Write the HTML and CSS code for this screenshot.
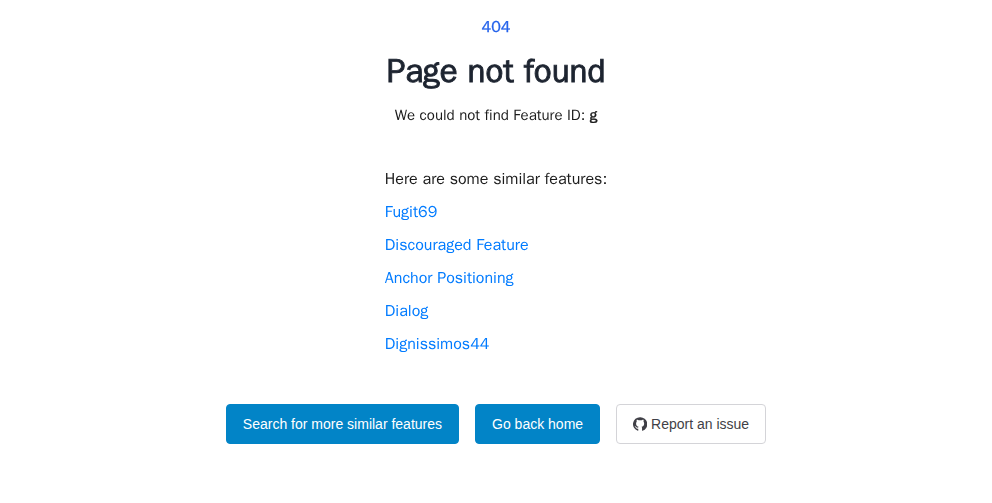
FILE: index.html
```html
<!DOCTYPE html>
<html lang="en">
<head>
<meta charset="utf-8">
<title>Page not found</title>
<link rel="stylesheet" href="styles.css">
</head>
<body>
<main class="page">
  <p class="code">404</p>
  <h1 class="title">Page not found</h1>
  <p class="detail">We could not find Feature ID: <strong>g</strong></p>
  <section class="similar">
    <p class="similar-heading">Here are some similar features:</p>
    <ul class="similar-list">
      <li><a href="#">Fugit69</a></li>
      <li><a href="#">Discouraged Feature</a></li>
      <li><a href="#">Anchor Positioning</a></li>
      <li><a href="#">Dialog</a></li>
      <li><a href="#">Dignissimos44</a></li>
    </ul>
  </section>
  <nav class="actions">
    <a class="button primary" href="#">Search for more similar features</a>
    <a class="button primary" href="#">Go back home</a>
    <a class="button" href="#"><svg class="icon" viewBox="0 0 16 16" aria-hidden="true"><path fill="currentColor" d="M8 .2a8 8 0 0 0-2.53 15.59c.4.07.55-.17.55-.38v-2.1c-2.01.37-2.6-.49-2.78-.98-.1-.25-.48-.98-.82-1.17-.28-.15-.68-.52-.01-.53.63-.01 1.08.58 1.23.82.72 1.21 1.87.87 2.33.66.07-.52.28-.87.51-1.07-1.78-.2-2.94-.89-2.94-3.55 0-.87.21-1.59.72-2.15-.08-.2-.36-1.02.08-2.12 0 0 .67-.21 2 .62.64-.18 1.12-.17 1.8-.17s1.16-.01 1.8.17c1.33-.84 2-.62 2-.62.44 1.1.16 1.92.08 2.12.51.56.72 1.27.72 2.15 0 2.67-1.17 3.35-2.95 3.55.29.25.54.73.54 1.48v2.89c0 .21.15.46.55.38A8 8 0 0 0 8 .2z"/></svg>Report an issue</a>
  </nav>
</main>
</body>
</html>
```
FILE: styles.css
```css
body {
  margin: 0;
  background: #fff;
  color: #1b1b1b;
  font-family: "WenQuanYi Zen Hei", "Liberation Sans", sans-serif;
  font-size: 16px;
}
p, h1, ul { margin: 0; padding: 0; }
.page {
  display: flex;
  flex-direction: column;
  align-items: center;
  padding-top: 15px;
}
.code { color: #2563eb; font-weight: 600; line-height: 24px; -webkit-text-stroke: 0.3px; }
.title { margin-top: 8px; color: #1d2430; font-size: 33.2px; font-weight: 700; line-height: 48px; -webkit-text-stroke: 0.9px; }
.detail { margin-top: 8px; font-size: 15px; line-height: 24px; }
.detail strong { -webkit-text-stroke: 0.45px; }
.similar { margin-top: 40px; }
.similar-heading { line-height: 24px; }
.similar-list { list-style: none; }
.similar-list li { margin-top: 9px; line-height: 24px; }
.similar-list a { color: #007bff; text-decoration: none; }
.actions { display: flex; gap: 16px; margin-top: 48px; }
.button {
  display: flex;
  align-items: center;
  box-sizing: border-box;
  height: 40px;
  padding: 0 16px;
  border: 1px solid #d4d4d8;
  border-radius: 4px;
  color: #3f3f46;
  font-family: "Liberation Sans", Arial, sans-serif;
  font-size: 14px;
  text-decoration: none;
}
.primary { border-color: #0284c7; background: #0284c7; color: #fff; }
.icon { width: 14px; height: 14px; margin-right: 4px; }
```
